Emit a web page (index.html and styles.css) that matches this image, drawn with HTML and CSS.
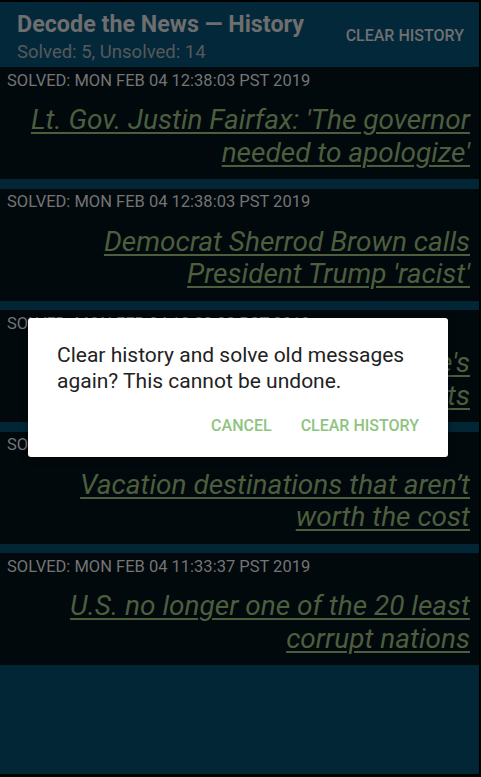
FILE: index.html
```html
<!DOCTYPE html>
<html lang="en">
<head>
<meta charset="utf-8">
<title>Decode the News — History</title>
<link rel="stylesheet" href="styles.css">
</head>
<body>
<div class="screen">
  <header class="appbar">
    <div class="appbar-titles">
      <div class="appbar-title">Decode the News — History</div>
      <div class="appbar-sub">Solved: 5, Unsolved: 14</div>
    </div>
    <div class="appbar-action">CLEAR HISTORY</div>
  </header>
  <div class="list">
    <div class="item">
      <div class="stamp">SOLVED: MON FEB 04 12:38:03 PST 2019</div>
      <div class="headline"><span>Lt. Gov. Justin Fairfax: 'The governor needed to apologize'</span></div>
    </div>
    <div class="item">
      <div class="stamp">SOLVED: MON FEB 04 12:38:03 PST 2019</div>
      <div class="headline"><span>Democrat Sherrod Brown calls President Trump 'racist'</span></div>
    </div>
    <div class="item">
      <div class="stamp">SOLVED: MON FEB 04 12:38:03 PST 2019</div>
      <div class="headline"><span>Pope Francis in Abu Dhabi: Pope's visit highlights Gulf contrasts</span></div>
    </div>
    <div class="item">
      <div class="stamp">SOLVED: MON FEB 04 11:33:37 PST 2019</div>
      <div class="headline"><span>Vacation destinations that aren’t worth the cost</span></div>
    </div>
    <div class="item">
      <div class="stamp">SOLVED: MON FEB 04 11:33:37 PST 2019</div>
      <div class="headline"><span>U.S. no longer one of the 20 least corrupt nations</span></div>
    </div>
  </div>
  <div class="dialog">
    <p class="dialog-text">Clear history and solve old messages again? This cannot be undone.</p>
    <div class="dialog-actions">
      <span class="dialog-btn">CANCEL</span>
      <span class="dialog-btn">CLEAR HISTORY</span>
    </div>
  </div>
</div>
</body>
</html>
```
FILE: styles.css
```css
html, body {
  margin: 0;
  padding: 0;
  background: #000;
}
body {
  width: 481px;
  height: 777px;
  overflow: hidden;
  font-family: Roboto, "Liberation Sans", sans-serif;
}
.screen {
  position: relative;
  margin-top: 2px;
  width: 479px;
  height: 772px;
  background: #032636;
  display: flex;
  flex-direction: column;
  overflow: hidden;
}
.appbar {
  height: 65px;
  flex: none;
  display: flex;
  justify-content: space-between;
  align-items: flex-start;
  padding: 0 15px 0 17px;
  box-sizing: border-box;
  background: #03283a;
}
.appbar-titles {
  padding-top: 8px;
}
.appbar-title {
  font-size: 23.3px;
  font-weight: 700;
  line-height: 28px;
  color: #6e6e6e;
}
.appbar-sub {
  font-size: 18.5px;
  line-height: 28px;
  color: #56595b;
}
.appbar-action {
  margin-top: 24px;
  font-size: 16px;
  font-weight: 500;
  line-height: 20px;
  color: #6e7072;
}
.list {
  display: flex;
  flex-direction: column;
  gap: 9.5px;
}
.item {
  height: 112px;
  box-sizing: border-box;
  background: #02090d;
  padding: 4.5px 9px 0 7px;
  overflow: hidden;
}
.stamp {
  font-size: 16.5px;
  line-height: 18px;
  color: #747474;
}
.headline {
  margin-top: 14.5px;
  text-align: right;
  font-size: 28px;
  font-style: italic;
  line-height: 32.5px;
  color: #4c5e3e;
}
.headline span {
  text-decoration: underline;
  text-decoration-thickness: 1.5px;
  text-underline-offset: 3px;
}
.dialog {
  position: absolute;
  left: 28px;
  top: 316px;
  width: 420px;
  height: 139px;
  box-sizing: border-box;
  background: #fff;
  border-radius: 3px;
  padding: 24px 20px 0 29px;
  box-shadow: 0 2px 6px rgba(0, 0, 0, 0.5);
}
.dialog-text {
  margin: 0;
  font-size: 21px;
  line-height: 26px;
  color: #222;
}
.dialog-actions {
  display: flex;
  justify-content: flex-end;
  gap: 29px;
  margin-top: 22px;
  padding-right: 9px;
}
.dialog-btn {
  font-size: 16px;
  font-weight: 500;
  line-height: 20px;
  color: #8fc480;
}
```
